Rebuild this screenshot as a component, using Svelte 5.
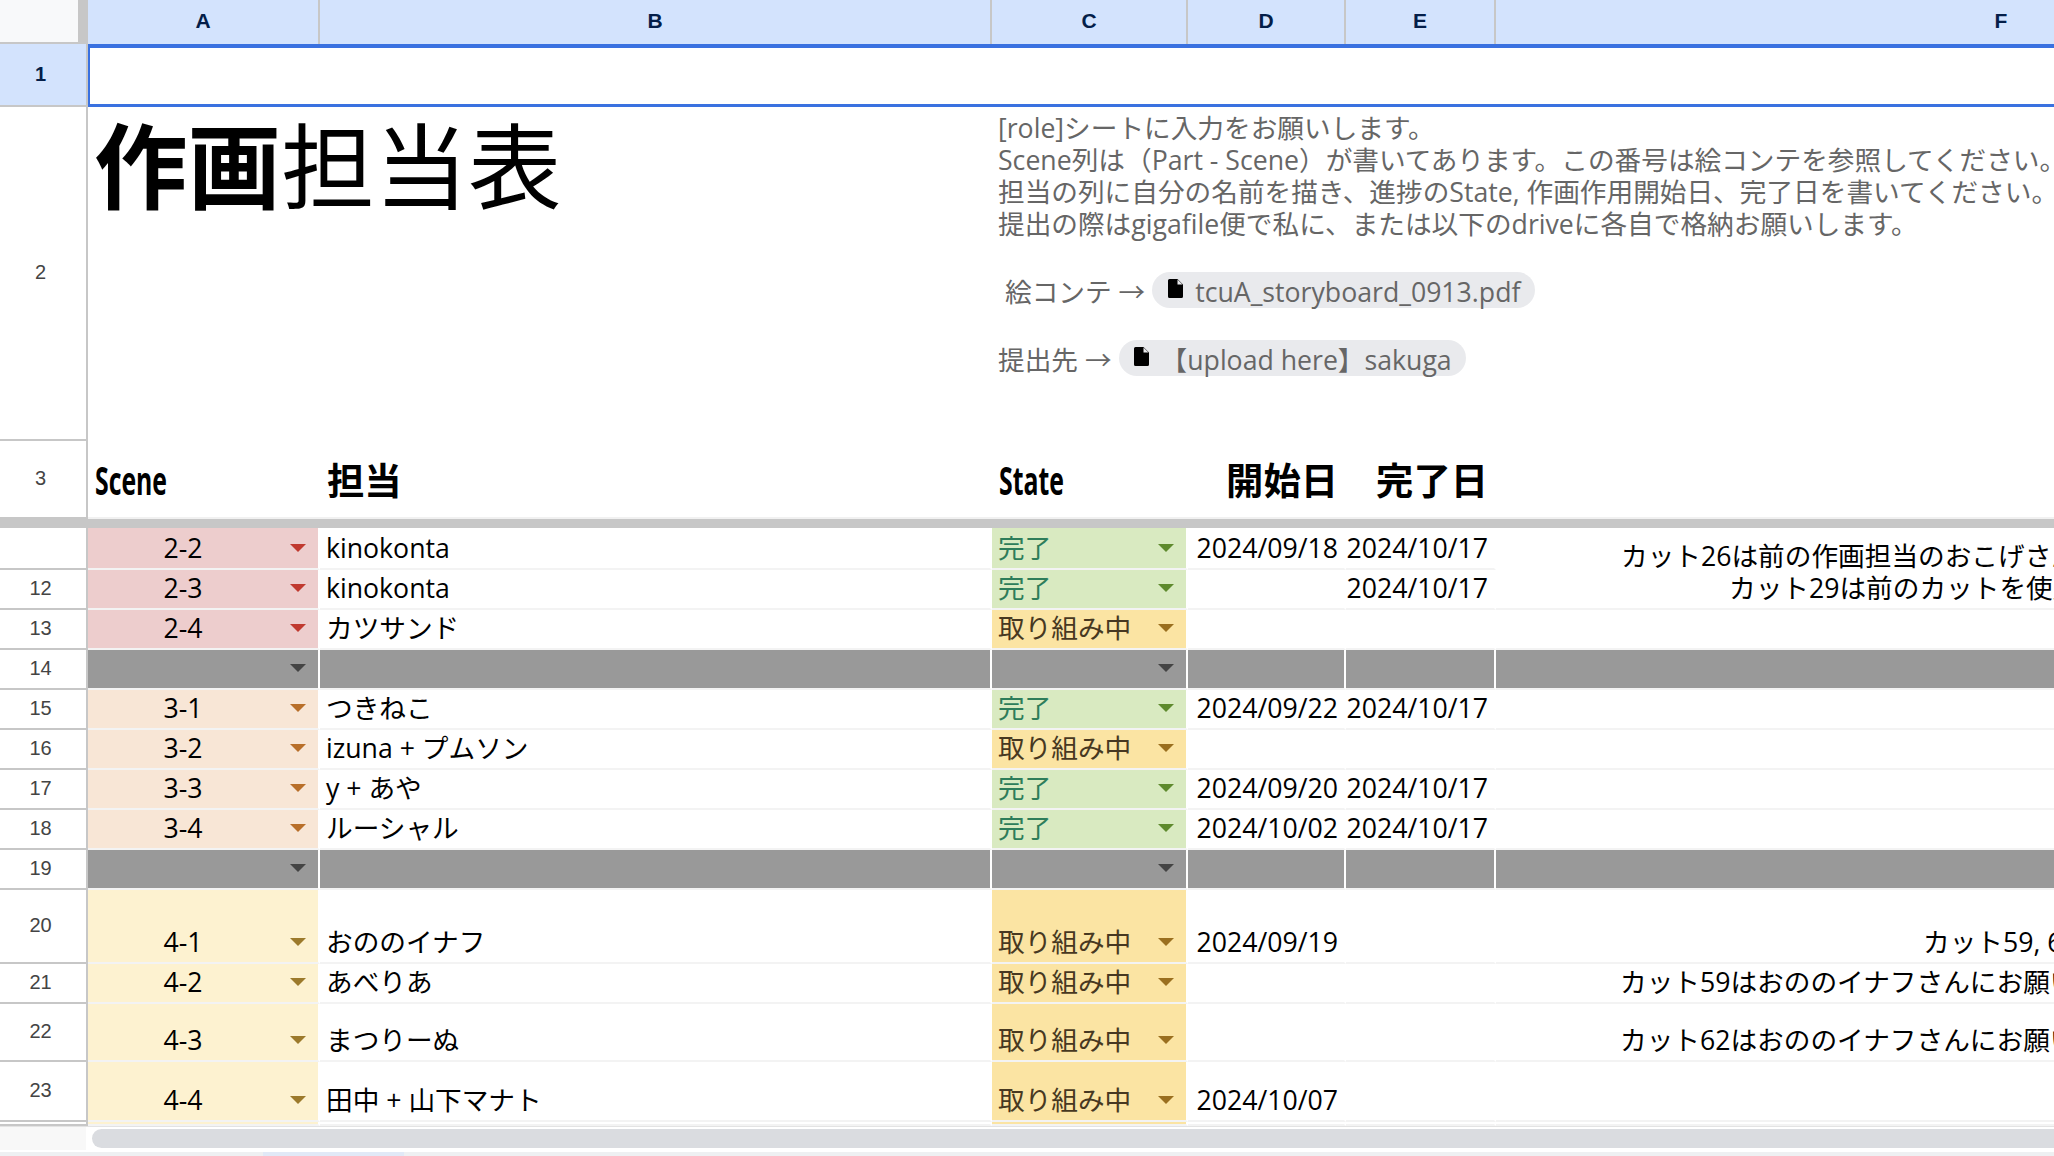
<script>
	const columns = ['A', 'B', 'C', 'D', 'E', 'F'];

	const done = '完了';
	const wip = '取り組み中';

	// noteX is the left offset of the text inside column F, which runs past the window
	const rows = [
		{ n: '', tone: 'red', scene: '2-2', who: 'kinokonta', state: done, start: '2024/09/18', end: '2024/10/17', merged: ['カット26は前の作画担当のおこげさんの', 'カット29は前のカットを使用'] },
		{ n: 12, tone: 'red', scene: '2-3', who: 'kinokonta', state: done, start: '', end: '2024/10/17', spanned: true },
		{ n: 13, tone: 'red', scene: '2-4', who: 'カツサンド', state: wip, start: '', end: '' },
		{ n: 14, tone: 'grey' },
		{ n: 15, tone: 'orange', scene: '3-1', who: 'つきねこ', state: done, start: '2024/09/22', end: '2024/10/17' },
		{ n: 16, tone: 'orange', scene: '3-2', who: 'izuna + プムソン', state: wip, start: '', end: '' },
		{ n: 17, tone: 'orange', scene: '3-3', who: 'y + あや', state: done, start: '2024/09/20', end: '2024/10/17' },
		{ n: 18, tone: 'orange', scene: '3-4', who: 'ルーシャル', state: done, start: '2024/10/02', end: '2024/10/17' },
		{ n: 19, tone: 'grey' },
		{ n: 20, tone: 'yellow', scene: '4-1', who: 'おののイナフ', state: wip, start: '2024/09/19', end: '', note: 'カット59, 62', noteX: 427 },
		{ n: 21, tone: 'yellow', scene: '4-2', who: 'あべりあ', state: wip, start: '', end: '', note: 'カット59はおののイナフさんにお願いします', noteX: 124 },
		{ n: 22, tone: 'yellow', scene: '4-3', who: 'まつりーぬ', state: wip, start: '', end: '', note: 'カット62はおののイナフさんにお願いします', noteX: 124 },
		{ n: 23, tone: 'yellow', scene: '4-4', who: '田中 + 山下マナト', state: wip, start: '2024/10/07', end: '' },
		{ n: '', tone: 'yellow', state: wip, start: '', end: '', stub: true }
	];

	const notes = [
		'[role]シートに入力をお願いします。',
		'Scene列は（Part - Scene）が書いてあります。この番号は絵コンテを参照してください。',
		'担当の列に自分の名前を描き、進捗のState, 作画作用開始日、完了日を書いてください。',
		'提出の際はgigafile便で私に、または以下のdriveに各自で格納お願いします。'
	];
</script>

{#snippet fileIcon()}
	<svg class="file" viewBox="0 0 15 19" width="15" height="19" aria-hidden="true">
		<path d="M1.5 0H9.5L15 5.5V17.5a1.5 1.5 0 0 1-1.5 1.5H1.5A1.5 1.5 0 0 1 0 17.5V1.5A1.5 1.5 0 0 1 1.5 0Z" fill="#000" />
		<path d="M9.5 0.5V5.5H14.5Z" fill="#e9eaed" />
	</svg>
{/snippet}

<div class="sheet">
	<div class="grid">
		<div class="corner"></div>
		{#each columns as c}
			<div class="colhead">{c}</div>
		{/each}

		<div class="rowhead active">1</div>
		<div class="selected"></div>

		<div class="rowhead">2</div>
		<div class="title-cell">
			<h1><b>作画</b>担当表</h1>
		</div>
		<div class="note-cell">
			{#each notes as line}
				<div class="note-line">{line}</div>
			{/each}
			<div class="link-row first">
				<span class="storyboard">絵コンテ →</span>
				<span class="chip">{@render fileIcon()}<span class="chip-text">tcuA_storyboard_0913.pdf</span></span>
			</div>
			<div class="link-row second">
				<span>提出先 →</span>
				<span class="chip upload">{@render fileIcon()}<span class="chip-text">【upload here】sakuga</span></span>
			</div>
		</div>

		<div class="rowhead">3</div>
		<div class="th"><span class="narrow">Scene</span></div>
		<div class="th">担当</div>
		<div class="th"><span class="narrow">State</span></div>
		<div class="th right">開始日</div>
		<div class="th right">完了日</div>
		<div class="th"></div>

		<div class="freeze"></div>

		{#each rows as r}
			<div class="rowhead">{r.n}</div>
			<div class="cell scene {r.tone}">
				<span class="val">{r.scene ?? ''}</span>
				{#if !r.stub}<i class="arrow"></i>{/if}
			</div>
			<div class="cell {r.tone === 'grey' ? 'grey' : ''}">{r.who ?? ''}</div>
			{#if r.tone === 'grey'}
				<div class="cell state grey"><span class="val"></span><i class="arrow"></i></div>
				<div class="cell grey"></div>
				<div class="cell grey"></div>
				<div class="cell grey"></div>
			{:else}
				<div class="cell state {r.state === done ? 'done' : 'wip'}">
					<span class="val">{r.state}</span>
					{#if !r.stub}<i class="arrow"></i>{/if}
				</div>
				<div class="cell date">{r.start}</div>
				<div class="cell date">{r.end}</div>
				{#if r.merged}
					<div class="cell merged">
						<span style="padding-left: 125px">{r.merged[0]}</span>
						<span style="padding-left: 233px">{r.merged[1]}</span>
					</div>
				{:else if !r.spanned}
					<div class="cell note" style="padding-left: {r.noteX ?? 0}px">{r.note ?? ''}</div>
				{/if}
			{/if}
		{/each}
	</div>

	<div class="scrollbar">
		<div class="scroll-side"></div>
		<div class="scroll-track"><div class="thumb"></div></div>
	</div>
	<div class="tabstrip"><div class="tab"></div></div>
</div>

<style>
	:global(body) {
		margin: 0;
		background: #fff;
	}
	.sheet {
		width: 2054px;
		height: 1156px;
		overflow: hidden;
		font-family: 'Open Sans', 'Noto Sans CJK JP', sans-serif;
		font-size: 26.67px;
		color: #000;
	}
	.grid {
		display: grid;
		grid-template-columns: 88px 232px 672px 196px 158px 150px 1012px;
		grid-template-rows: 44px 63px 334px 78px 9px 42px repeat(8, 40px) 74px 40px 58px 60px 4px;
		width: 2054px;
		overflow: hidden;
	}
	.corner {
		background: #f8f9fa;
		border-right: 10px solid #c7c7c7;
		border-bottom: 2px solid #c7c7c7;
	}
	.colhead {
		display: flex;
		align-items: center;
		justify-content: center;
		padding-bottom: 3px;
		background: #d3e3fd;
		border-right: 2px solid #c7c7c7;
		font: bold 21px 'Liberation Sans', sans-serif;
		color: #041e49;
	}
	.rowhead {
		display: flex;
		align-items: center;
		justify-content: center;
		padding-right: 5px;
		padding-bottom: 1px;
		border-right: 2px solid #c7c7c7;
		border-bottom: 2px solid #c7c7c7;
		font: 20px 'Liberation Sans', sans-serif;
		color: #444;
	}
	.rowhead.active {
		background: #d3e3fd;
		color: #041e49;
		font-weight: bold;
	}
	.selected {
		grid-column: 2 / -1;
		border: solid #3a71e0;
		border-width: 4px 0 3px 2px;
	}
	.title-cell {
		grid-column: 2 / 4;
		padding: 0 0 0 6px;
	}
	h1 {
		margin: -6px 0 0;
		font-size: 93.5px;
		line-height: 122px;
		font-weight: 400;
		font-family: 'Noto Sans CJK JP', sans-serif;
	}
	h1 b {
		font-weight: 700;
	}
	.note-cell {
		grid-column: 4 / -1;
		padding: 5px 0 0 6px;
		color: #666;
		white-space: nowrap;
		overflow: hidden;
	}
	.note-line {
		line-height: 32px;
	}
	.link-row {
		display: flex;
		align-items: center;
		height: 36px;
		gap: 7px;
	}
	.link-row.first {
		margin-top: 32px;
	}
	.link-row.second {
		margin-top: 32px;
	}
	.storyboard {
		padding-left: 7px;
	}
	.chip {
		display: inline-flex;
		align-items: center;
		height: 36px;
		padding: 0 15px 0 16px;
		border-radius: 18px;
		background: #e9eaed;
		color: #666;
	}
	.chip-text {
		line-height: 36px;
		padding-top: 3px;
	}
	.file {
		margin-right: 12px;
		margin-top: -4px;
		flex: none;
	}
	.chip.upload {
		padding-left: 15px;
		padding-right: 14px;
	}
	.th {
		display: flex;
		align-items: center;
		padding-left: 7px;
		border-bottom: 2px solid #f1f1f1;
		font-size: 37.3px;
		font-weight: 700;
		white-space: nowrap;
		font-family: 'Noto Sans CJK JP', sans-serif;
	}
	.th.right {
		justify-content: flex-end;
		padding: 0 8px 0 0;
	}
	.narrow {
		display: inline-block;
		font-family: 'Open Sans', sans-serif;
		font-size: 40px;
		transform: scaleX(0.62);
		transform-origin: left center;
	}
	.freeze {
		grid-column: 1 / -1;
		background: #c7c7c7;
	}
	.cell {
		display: flex;
		align-items: flex-end;
		min-width: 0;
		padding-left: 6px;
		border-right: 2px solid #fff;
		border-bottom: 2px solid #f3f3f3;
		line-height: 36px;
		padding-bottom: 2px;
		white-space: nowrap;
		overflow: hidden;
	}
	.val {
		flex: 1;
	}
	.arrow {
		flex: none;
		width: 0;
		height: 0;
		margin: 0 12px 14px 0;
		border: 8px solid transparent;
		border-top: 8px solid #444;
		border-bottom: 0;
	}
	.scene {
		padding-left: 0;
		text-align: center;
	}
	.scene .val {
		padding-right: 12px;
	}
	.red {
		background: #edcdcd;
	}
	.red .arrow {
		border-top-color: #c0392f;
	}
	.orange {
		background: #f8e6d6;
	}
	.orange .arrow {
		border-top-color: #b86f2a;
	}
	.yellow {
		background: #fdf2d0;
	}
	.yellow .arrow {
		border-top-color: #9c7a2b;
	}
	.grey {
		background: #999;
		border-bottom-color: #f3f3f3;
	}
	.done {
		background: #d9eac1;
		color: #2e7d5a;
	}
	.done .arrow {
		border-top-color: #5f8a2e;
	}
	.wip {
		background: #fbe4a3;
		color: #473821;
	}
	.wip .arrow {
		border-top-color: #9a6f1f;
	}
	.date {
		justify-content: flex-end;
		padding: 0 6px 2px 0;
	}
	.note {
		padding-right: 0;
		border-right: 0;
	}
	.merged {
		grid-row: span 2;
		flex-direction: column;
		align-items: flex-start;
		justify-content: flex-end;
		padding: 0 0 4px;
		border-right: 0;
		line-height: 32px;
	}
	.scrollbar {
		display: flex;
		height: 26px;
		border-top: 1px solid #e3e3e3;
		box-sizing: border-box;
	}
	.scroll-side {
		flex: none;
		width: 86px;
		height: 23px;
		background: #f8f8f8;
	}
	.scroll-track {
		flex: 1;
		min-width: 0;
		padding: 2px 0 0 6px;
		overflow: hidden;
	}
	.thumb {
		height: 19px;
		width: 2100px;
		border-radius: 10px;
		background: #dadce0;
	}
	.tabstrip {
		height: 4px;
		background: #eef0f2;
		padding-left: 263px;
	}
	.tab {
		width: 141px;
		height: 4px;
		background: #e1e9f7;
	}
</style>
